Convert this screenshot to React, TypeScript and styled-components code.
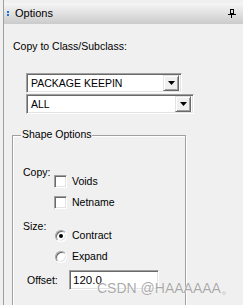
import React from 'react'
import styled, { createGlobalStyle, css } from 'styled-components'

const Global = createGlobalStyle`
  html, body { margin: 0; padding: 0; background: #f0f0f0; }
  body {
    font-family: 'Liberation Sans', Arial, sans-serif;
    font-size: 10.5px;
    color: #000;
  }
`

/* classic win32 bevels */
const sunken = css`
  border: 1px solid;
  border-color: #a0a0a0 #ffffff #ffffff #a0a0a0;
  box-shadow: inset 1px 1px 0 #696969, inset -1px -1px 0 #e3e3e3;
  background: #fff;
  box-sizing: border-box;
`

const raised = css`
  border: 1px solid;
  border-color: #e3e3e3 #696969 #696969 #e3e3e3;
  box-shadow: inset 1px 1px 0 #fff, inset -1px -1px 0 #a0a0a0;
  background: #f0f0f0;
  box-sizing: border-box;
`

const Screen = styled.div`
  position: relative;
  width: 243px;
  height: 305px;
  overflow: hidden;
  background: #f0f0f0;
`

const Panel = styled.div`
  margin-left: 3px;
  padding-top: 3px;
  height: 302px;
  border-left: 1px solid #a0a0a0;
`

const TitleBar = styled.div`
  height: 21px;
  display: flex;
  align-items: center;
  background: linear-gradient(#f6f6f6, #cbcbcb);
  padding-left: 3px;
  padding-right: 7px;
`

const Grip = styled.div`
  display: flex;
  flex-direction: column;
  gap: 1px;
  margin-right: 6px;
  span {
    width: 2px;
    height: 2px;
    background: #1a73d4;
  }
`

const Title = styled.span`
  flex: 1;
  font-size: 11px;
  line-height: 13px;
`

const Body = styled.div`
  padding-left: 9px;
`

const Heading = styled.div`
  margin-top: 16px;
  line-height: 13px;
`

const ComboStack = styled.div`
  margin-top: 20px;
  margin-left: 13px;
  display: flex;
  flex-direction: column;
  gap: 1px;
`

const ComboBox = styled.div<{ $w: number }>`
  ${sunken};
  width: ${p => p.$w}px;
  height: 20px;
  display: flex;
  align-items: center;
  padding: 2px 2px 2px 4px;
`

const ComboText = styled.span`
  flex: 1;
  line-height: 13px;
  white-space: nowrap;
`

const DropButton = styled.div`
  ${raised};
  width: 16px;
  height: 16px;
  display: flex;
  align-items: center;
  justify-content: center;
  svg { display: block; }
`

const Frame = styled.div`
  position: relative;
  margin-top: 21px;
  margin-left: -1px;
  width: 174px;
  height: 200px;
  box-sizing: border-box;
  border: 1px solid #a0a0a0;
  box-shadow: inset 1px 1px 0 #fff, 1px 1px 0 #fff;
  padding: 30px 0 0 10px;
`

const Legend = styled.span`
  position: absolute;
  top: -8px;
  left: 8px;
  padding: 0 1px;
  background: #f0f0f0;
  line-height: 13px;
`

const Field = styled.div<{ $mt?: number }>`
  display: grid;
  grid-template-columns: 31px auto;
  margin-top: ${p => p.$mt ?? 0}px;
`

const FieldLabel = styled.span`
  line-height: 13px;
`

const Options = styled.div<{ $pt: number }>`
  display: flex;
  flex-direction: column;
  gap: 8px;
  padding-top: ${p => p.$pt}px;
`

const OptionRow = styled.label`
  display: flex;
  align-items: center;
  gap: 5px;
  height: 13px;
  line-height: 13px;
`

const CheckBox = styled.span`
  ${sunken};
  width: 13px;
  height: 13px;
  flex: none;
`

const Radio = styled.span<{ $on?: boolean }>`
  position: relative;
  width: 12px;
  height: 12px;
  flex: none;
  margin-left: 1px;
  box-sizing: border-box;
  border-radius: 50%;
  border: 1px solid;
  border-color: #a0a0a0 #ffffff #ffffff #a0a0a0;
  background: #fff;
  box-shadow: inset 1px 1px 0 #696969, inset -1px -1px 0 #e3e3e3;
  &::after {
    content: '';
    display: ${p => (p.$on ? 'block' : 'none')};
    position: absolute;
    left: 3px;
    top: 3px;
    width: 4px;
    height: 4px;
    border-radius: 50%;
    background: #000;
  }
`

const OffsetRow = styled.div`
  display: grid;
  grid-template-columns: 42px 90px;
  align-items: center;
  margin-top: 7px;
  padding-left: 4px;
`

const TextBox = styled.div`
  ${sunken};
  height: 20px;
  padding: 2px 3px;
  font-size: 11.5px;
  line-height: 14px;
`

const Watermark = styled.span`
  position: absolute;
  left: 97px;
  top: 280px;
  font-size: 14px;
  line-height: 16px;
  color: rgba(140, 140, 140, 0.75);
  text-shadow: 0 0 1px #fff, 0 0 1px #fff;
  white-space: nowrap;
  pointer-events: none;
`

const Arrow = () => (
  <svg width="7" height="4" viewBox="0 0 7 4">
    <path d="M0 0h7L3.5 4z" fill="#000" />
  </svg>
)

const Pin = () => (
  <svg width="8" height="9" viewBox="0 0 8 9" shapeRendering="crispEdges">
    <rect x="2.5" y="0.5" width="3" height="4" fill="none" stroke="#000" />
    <rect x="0" y="5" width="8" height="1" fill="#000" />
    <rect x="3" y="6" width="1" height="3" fill="#000" />
  </svg>
)

export default function App() {
  return (
    <>
      <Global />
      <Screen>
        <Panel>
          <TitleBar>
            <Grip><span /><span /></Grip>
            <Title>Options</Title>
            <Pin />
          </TitleBar>
          <Body>
            <Heading>Copy to Class/Subclass:</Heading>
            <ComboStack>
              <ComboBox $w={156}>
                <ComboText>PACKAGE KEEPIN</ComboText>
                <DropButton><Arrow /></DropButton>
              </ComboBox>
              <ComboBox $w={168}>
                <ComboText>ALL</ComboText>
                <DropButton><Arrow /></DropButton>
              </ComboBox>
            </ComboStack>
            <Frame>
              <Legend>Shape Options</Legend>
              <Field>
                <FieldLabel>Copy:</FieldLabel>
                <Options $pt={9}>
                  <OptionRow><CheckBox />Voids</OptionRow>
                  <OptionRow><CheckBox />Netname</OptionRow>
                </Options>
              </Field>
              <Field $mt={11}>
                <FieldLabel>Size:</FieldLabel>
                <Options $pt={9}>
                  <OptionRow><Radio $on />Contract</OptionRow>
                  <OptionRow><Radio />Expand</OptionRow>
                </Options>
              </Field>
              <OffsetRow>
                <FieldLabel>Offset:</FieldLabel>
                <TextBox>120.0</TextBox>
              </OffsetRow>
            </Frame>
          </Body>
        </Panel>
        <Watermark>CSDN @HAAAAAA。</Watermark>
      </Screen>
    </>
  )
}
